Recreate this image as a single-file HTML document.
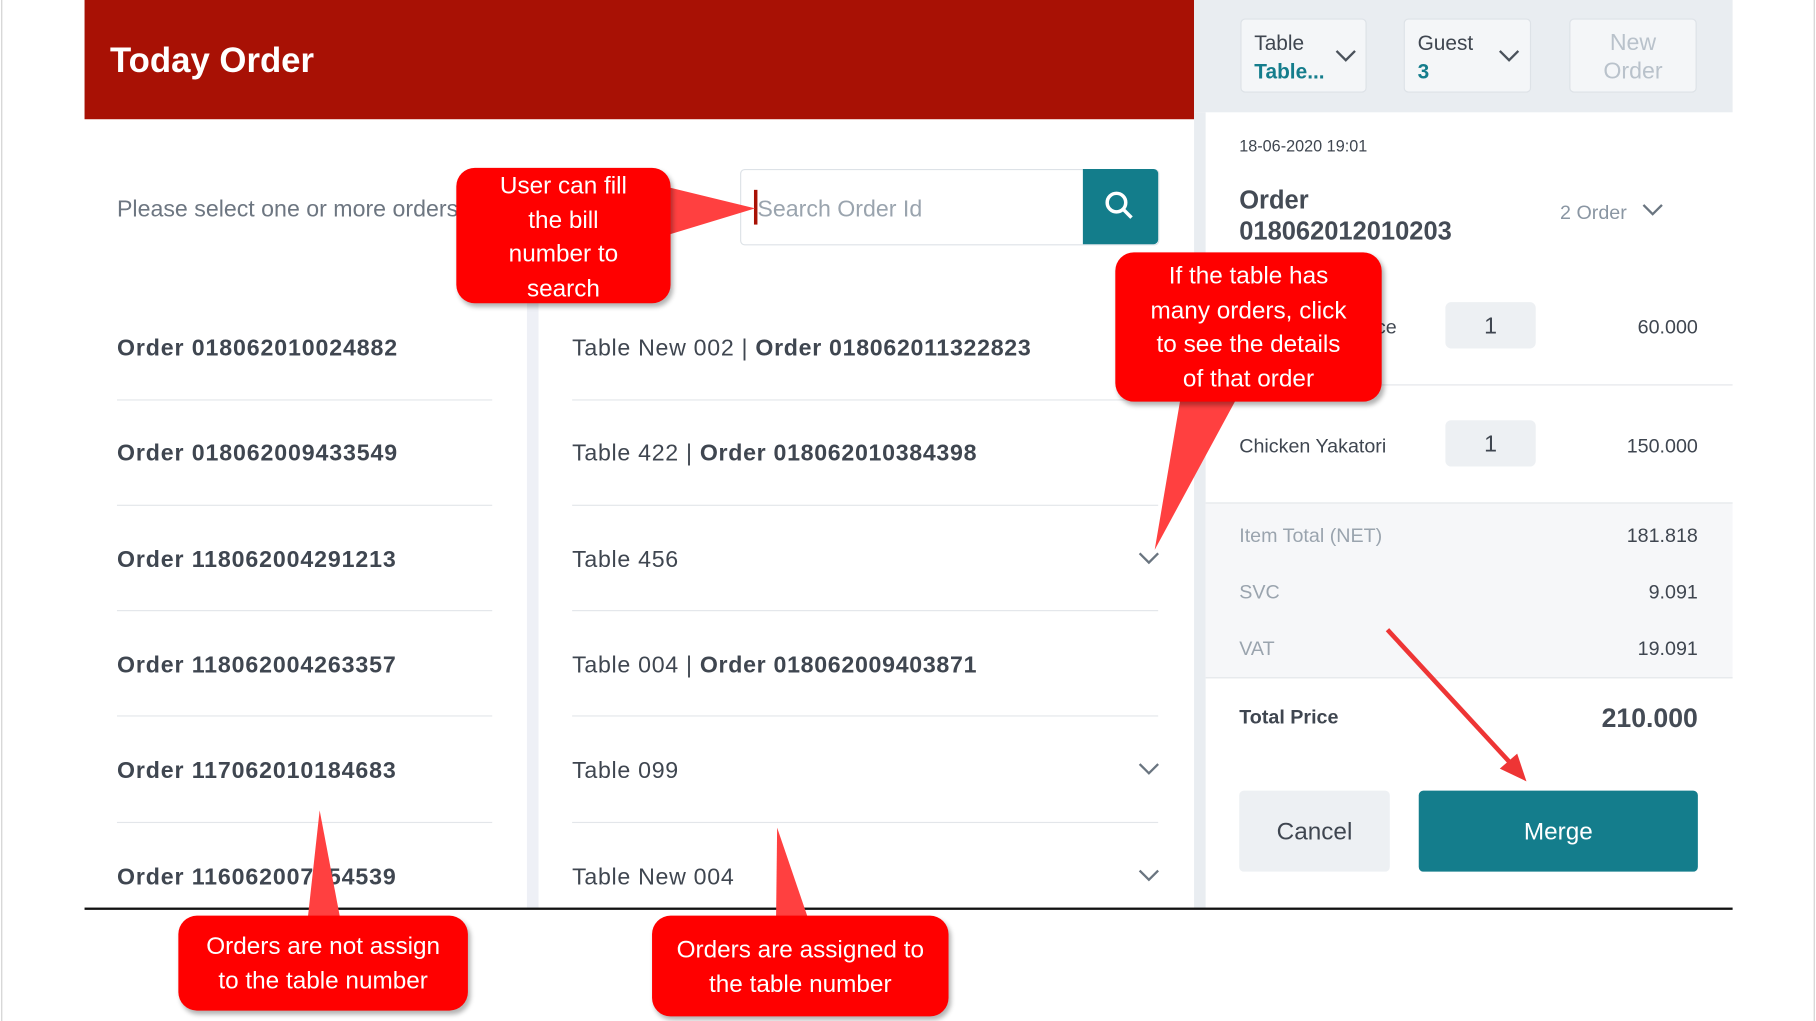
<!DOCTYPE html>
<html><head><meta charset="utf-8">
<style>
html,body{margin:0;padding:0;background:#fff;overflow:hidden;width:1816px;height:1021px}
#w{position:absolute;left:0;top:0;width:1568px;height:882px;transform:scale(1.15816,1.15760);transform-origin:0 0;font-family:"Liberation Sans",sans-serif;color:#3f4650}
.a{position:absolute;white-space:nowrap}
.hdr{left:73px;top:0;width:958px;height:103px;background:#a81105}
.rp{left:1031px;top:0;width:465px;height:97px;background:#e9edf1}
.box{position:absolute;top:16px;height:64px;background:#f4f6f8;border:1px solid #dde2e7;border-radius:4px;box-sizing:border-box}
.l1{font-size:20px;font-weight:bold;letter-spacing:0.75px}
.dv{position:absolute;height:1px;background:#e3e6ea}
.mid{font-size:20px;letter-spacing:0.6px}
.cal{position:absolute;background:#ff0000;border-radius:16px;color:#fff;font-size:21px;text-align:center;line-height:29.5px;box-shadow:2px 3px 4px rgba(0,0,0,.3)}
.q{position:absolute;width:78px;height:40px;background:#edf0f3;border-radius:5px;text-align:center;line-height:42px;font-size:20px}
.lbl{font-size:17px;color:#9aa4ae}
.val{font-size:17px;right:102px;text-align:right}
</style></head><body><div id="w">
<div class="a" style="left:1px;top:0;width:1px;height:882px;background:#d0d0d0"></div>
<div class="a" style="left:1566px;top:0;width:1px;height:882px;background:#d0d0d0"></div>
<div class="a hdr"></div>
<div class="a" style="left:95px;top:36px;color:#fff;font-size:30px;font-weight:bold">Today Order</div>
<div class="a rp"></div>
<div class="box" style="left:1071px;width:109px"><div class="a" style="left:11px;top:10px;font-size:18px">Table</div><div class="a" style="left:11px;top:35px;font-size:18px;color:#147d8c;font-weight:bold">Table...</div><svg class="a" style="left:80px;top:24px" width="20" height="14"><path d="M2 3l8 8 8-8" stroke="#4a525b" stroke-width="2" fill="none"/></svg></div>
<div class="box" style="left:1212px;width:110px"><div class="a" style="left:11px;top:10px;font-size:18px">Guest</div><div class="a" style="left:11px;top:35px;font-size:18px;color:#147d8c;font-weight:bold">3</div><svg class="a" style="left:80px;top:24px" width="20" height="14"><path d="M2 3l8 8 8-8" stroke="#4a525b" stroke-width="2" fill="none"/></svg></div>
<div class="box" style="left:1355px;width:110px;color:#b9c2cb;font-size:20px;text-align:center;line-height:25px;padding-top:8px">New<br>Order</div>
<div class="a" style="left:1031px;top:97px;width:10px;height:688px;background:#e9edf1"></div>
<div class="a" style="left:455px;top:211px;width:10px;height:574px;background:#eef0f6"></div>
<div class="a" style="left:1070px;top:118px;font-size:14px">18-06-2020 19:01</div>
<div class="a" style="left:1070px;top:159px;font-size:22px;line-height:27px;font-weight:bold;color:#444b55">Order<br>018062012010203</div>
<div class="a" style="left:1347px;top:174px;font-size:17px;color:#8a96a3">2 Order</div>
<svg class="a" style="left:1417px;top:174px" width="20" height="14"><path d="M2 3l8 8 8-8" stroke="#6a7580" stroke-width="2" fill="none"/></svg>
<div class="a" style="left:1188px;top:273px;font-size:17px">ce</div>
<div class="q" style="left:1248px;top:261px">1</div>
<div class="a val" style="top:273px">60.000</div>
<div class="dv" style="left:1041px;top:332px;width:455px"></div>
<div class="a" style="left:1070px;top:376px;font-size:17px">Chicken Yakatori</div>
<div class="q" style="left:1248px;top:363px">1</div>
<div class="a val" style="top:376px">150.000</div>
<div class="a" style="left:1041px;top:434px;width:455px;height:150px;background:#f6f7f9;border-top:1px solid #e3e6ea;border-bottom:1px solid #e3e6ea"></div>
<div class="a lbl" style="left:1070px;top:453px">Item Total (NET)</div><div class="a val" style="top:453px">181.818</div>
<div class="a lbl" style="left:1070px;top:502px">SVC</div><div class="a val" style="top:502px">9.091</div>
<div class="a lbl" style="left:1070px;top:551px">VAT</div><div class="a val" style="top:551px">19.091</div>
<div class="a" style="left:1070px;top:610px;font-size:17px;font-weight:bold">Total Price</div>
<div class="a" style="right:102px;top:607px;font-size:23px;font-weight:bold;color:#444b55">210.000</div>
<div class="a" style="left:1070px;top:683px;width:130px;height:70px;background:#edf0f3;border-radius:4px;text-align:center;line-height:72px;font-size:21px">Cancel</div>
<div class="a" style="left:1225px;top:683px;width:241px;height:70px;background:#147d8c;border-radius:4px;text-align:center;line-height:72px;font-size:21px;color:#fff">Merge</div>
<div class="a" style="left:101px;top:170px;font-size:20px;color:#6d7681">Please select one or more orders</div>
<div class="a" style="left:639px;top:146px;width:360px;height:64px;border:1px solid #dde2e7;border-radius:4px;background:#fff"></div>
<div class="a" style="left:651px;top:164px;width:3px;height:30px;background:#a81105"></div>
<div class="a" style="left:654px;top:170px;font-size:20px;color:#9aa4ae">Search Order Id</div>
<div class="a" style="left:935px;top:146px;width:65px;height:65px;background:#137d8b;border-radius:0 4px 4px 0"></div>
<svg class="a" style="left:952px;top:163px" width="30" height="30"><circle cx="12" cy="12" r="8" stroke="#fff" stroke-width="3" fill="none"/><path d="M18 18l7 7" stroke="#fff" stroke-width="3"/></svg>
<div class="a l1" style="left:101px;top:290px">Order 018062010024882</div>
<div class="a l1" style="left:101px;top:381px">Order 018062009433549</div>
<div class="a l1" style="left:101px;top:473px">Order 118062004291213</div>
<div class="a l1" style="left:101px;top:564px">Order 118062004263357</div>
<div class="a l1" style="left:101px;top:655px">Order 117062010184683</div>
<div class="a l1" style="left:101px;top:747px">Order 116062007154539</div>
<div class="dv" style="left:101px;top:345px;width:324px"></div><div class="dv" style="left:101px;top:436px;width:324px"></div><div class="dv" style="left:101px;top:527px;width:324px"></div><div class="dv" style="left:101px;top:618px;width:324px"></div><div class="dv" style="left:101px;top:710px;width:324px"></div>
<div class="a mid" style="left:494px;top:290px">Table New 002 | <b>Order 018062011322823</b></div>
<div class="a mid" style="left:494px;top:381px">Table 422 | <b>Order 018062010384398</b></div>
<div class="a mid" style="left:494px;top:473px">Table 456</div>
<div class="a mid" style="left:494px;top:564px">Table 004 | <b>Order 018062009403871</b></div>
<div class="a mid" style="left:494px;top:655px">Table 099</div>
<div class="a mid" style="left:494px;top:747px">Table New 004</div>
<div class="dv" style="left:494px;top:345px;width:506px"></div><div class="dv" style="left:494px;top:436px;width:506px"></div><div class="dv" style="left:494px;top:527px;width:506px"></div><div class="dv" style="left:494px;top:618px;width:506px"></div><div class="dv" style="left:494px;top:710px;width:506px"></div>
<svg class="a" style="left:982px;top:475px" width="20" height="14"><path d="M2 3l8 8 8-8" stroke="#6a7580" stroke-width="2" fill="none"/></svg>
<svg class="a" style="left:982px;top:657px" width="20" height="14"><path d="M2 3l8 8 8-8" stroke="#6a7580" stroke-width="2" fill="none"/></svg>
<svg class="a" style="left:982px;top:749px" width="20" height="14"><path d="M2 3l8 8 8-8" stroke="#6a7580" stroke-width="2" fill="none"/></svg>
<div class="a" style="left:73px;top:784px;width:1423px;height:2px;background:#111"></div>
<svg class="a" style="left:0;top:0" width="1568" height="882">
<polygon points="570,160 652,180 570,205" fill="#ff4040"/>
<polygon points="1020,340 1070,340 997,475" fill="#ff4040"/>
<polygon points="265,800 295,800 276,700" fill="#ff4040"/>
<polygon points="670,800 700,800 671,715" fill="#ff4040"/>
<line x1="1198" y1="544" x2="1305" y2="660" stroke="#ee3535" stroke-width="4"/>
<polygon points="1318,675 1295,664 1310,651" fill="#ee3535"/>
</svg>
<div class="cal" style="left:394px;top:145px;width:185px;height:116px;padding-top:1px">User can fill<br>the bill<br>number to<br>search</div>
<div class="cal" style="left:963px;top:218px;width:230px;height:129px;padding-top:6px;box-sizing:border-box">If the table has<br>many orders, click<br>to see the details<br>of that order</div>
<div class="cal" style="left:154px;top:791px;width:250px;height:82px;padding-top:12px;box-sizing:border-box">Orders are not assign<br>to the table number</div>
<div class="cal" style="left:563px;top:791px;width:256px;height:87px;padding-top:15px;box-sizing:border-box">Orders are assigned to<br>the table number</div>
</div></body></html>
